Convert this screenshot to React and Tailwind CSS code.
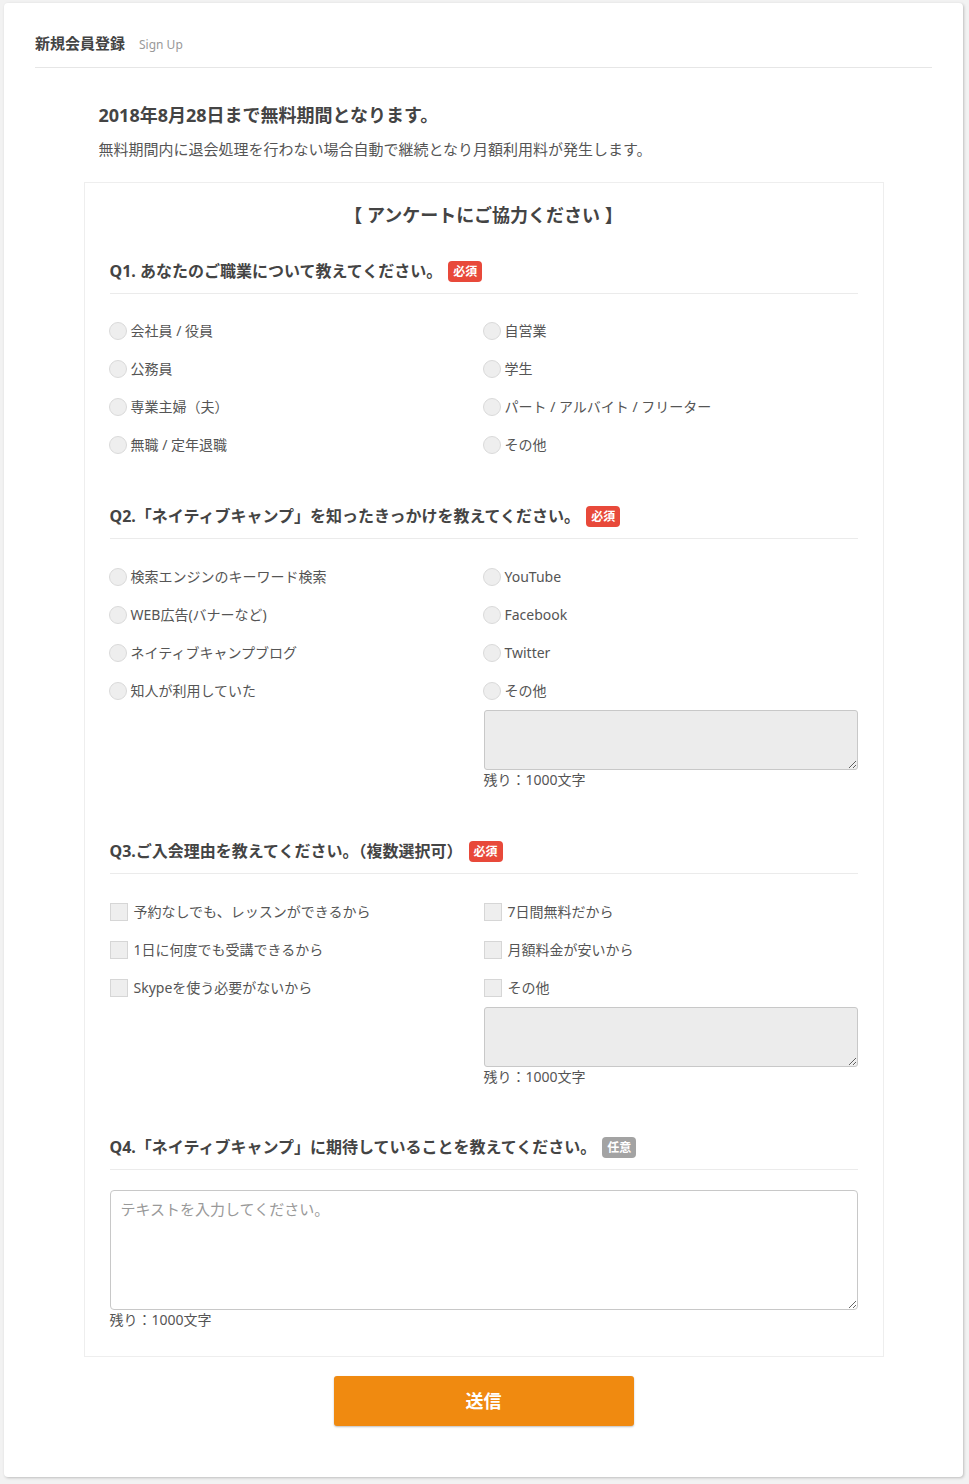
import React from "react";

const FONT = { fontFamily: '"Noto Sans", "Noto Sans CJK JP", sans-serif' };

function Radio({ label }) {
  return (
    <div className="flex h-[38px] items-center">
      <span className="ml-[-1px] inline-block h-[18px] w-[18px] rounded-full border border-[#dadada] bg-[#eeeeee]" />
      <span className="ml-[4px] text-[14px] leading-[20px] text-[#555]">{label}</span>
    </div>
  );
}

function Check({ label }) {
  return (
    <div className="flex h-[38px] items-center">
      <span className="inline-block h-[18px] w-[18px] border border-[#d6d6d6] bg-[#eeeeee]" />
      <span className="ml-[6px] text-[14px] leading-[20px] text-[#555]">{label}</span>
    </div>
  );
}

function Badge({ children, gray }) {
  return (
    <span
      className={
        "ml-[6px] inline-flex h-[21px] items-center rounded-[4px] px-[5px] text-[12px] font-bold leading-[21px] text-white " +
        (gray ? "bg-[#a3a3a3]" : "bg-[#e8493a]")
      }
    >
      {children}
    </span>
  );
}

function QHead({ children, badge, gray, className }) {
  return (
    <div className={"flex items-center border-b border-[#ebebeb] pb-[10px] " + (className || "")}>
      <span className="text-[16px] font-bold leading-[24px] text-[#444]">{children}</span>
      <Badge gray={gray}>{badge}</Badge>
    </div>
  );
}

function Remain() {
  return <div className="text-[14px] leading-[20px] text-[#555]">残り：1000文字</div>;
}

export default function App() {
  return (
    <div className="min-h-[1484px] bg-[#f2f2f2] pt-[3px]" style={FONT}>
      <div className="ml-[4px] w-[959px] rounded-[4px] bg-white pb-[51px] shadow-[1px_1px_3px_rgba(0,0,0,0.22)]">
        {/* header */}
        <div className="px-[31px] pt-[30px]">
          <div className="flex items-baseline border-b border-[#e6e6e6] pb-[12px]">
            <span className="text-[15px] font-bold leading-[20px] text-[#444]">新規会員登録</span>
            <span className="ml-[14px] text-[12px] leading-[20px] text-[#999]">Sign Up</span>
          </div>
        </div>

        <div className="mx-auto w-[800px]">
          <div className="pl-[15px] pt-[34px]">
            <div className="text-[18px] font-bold leading-[26px] text-[#444]">
              2018年8月28日まで無料期間となります。
            </div>
            <div className="mt-[10px] text-[15px] leading-[22px] text-[#555]">
              無料期間内に退会処理を行わない場合自動で継続となり月額利用料が発生します。
            </div>
          </div>

          {/* survey box */}
          <div className="mt-[22px] border border-[#eeeeee] px-[25px] pb-[26px] pt-[19px]">
            <div className="text-center text-[18px] font-bold leading-[26px] text-[#444]">
              【 アンケートにご協力ください 】
            </div>

            {/* Q1 */}
            <QHead className="mt-[31px]" badge="必須">
              Q1. あなたのご職業について教えてください。
            </QHead>
            <div className="mt-[18px] grid grid-cols-2">
              <div className="flex flex-col">
                <Radio label="会社員 / 役員" />
                <Radio label="公務員" />
                <Radio label="専業主婦（夫）" />
                <Radio label="無職 / 定年退職" />
              </div>
              <div className="flex flex-col">
                <Radio label="自営業" />
                <Radio label="学生" />
                <Radio label="パート / アルバイト / フリーター" />
                <Radio label="その他" />
              </div>
            </div>

            {/* Q2 */}
            <QHead className="mt-[40px]" badge="必須">
              Q2.「ネイティブキャンプ」を知ったきっかけを教えてください。
            </QHead>
            <div className="mt-[19px] grid grid-cols-2">
              <div className="flex flex-col">
                <Radio label="検索エンジンのキーワード検索" />
                <Radio label="WEB広告(バナーなど)" />
                <Radio label="ネイティブキャンプブログ" />
                <Radio label="知人が利用していた" />
              </div>
              <div className="flex flex-col">
                <Radio label="YouTube" />
                <Radio label="Facebook" />
                <Radio label="Twitter" />
                <Radio label="その他" />
                <textarea
                  className="block h-[60px] w-full rounded-[3px] border border-[#c8c8c8] bg-[#ececec] outline-none"
                  readOnly
                />
                <Remain />
              </div>
            </div>

            {/* Q3 */}
            <QHead className="mt-[49px]" badge="必須">
              Q3.ご入会理由を教えてください。（複数選択可）
            </QHead>
            <div className="mt-[19px] grid grid-cols-2">
              <div className="flex flex-col">
                <Check label="予約なしでも、レッスンができるから" />
                <Check label="1日に何度でも受講できるから" />
                <Check label="Skypeを使う必要がないから" />
              </div>
              <div className="flex flex-col">
                <Check label="7日間無料だから" />
                <Check label="月額料金が安いから" />
                <Check label="その他" />
                <textarea
                  className="block h-[60px] w-full rounded-[3px] border border-[#c8c8c8] bg-[#ececec] outline-none"
                  readOnly
                />
                <Remain />
              </div>
            </div>

            {/* Q4 */}
            <QHead className="mt-[48px]" badge="任意" gray>
              Q4.「ネイティブキャンプ」に期待していることを教えてください。
            </QHead>
            <textarea
              className="mt-[20px] block h-[120px] w-full rounded-[4px] border border-[#c8c8c8] bg-white px-[10px] py-[7px] text-[15px] leading-[22px] text-[#555] outline-none placeholder:text-[#999]"
              placeholder="テキストを入力してください。"
              style={FONT}
            />
            <Remain />
          </div>

          <div className="mt-[19px] flex justify-center">
            <button
              className="h-[50px] w-[300px] rounded-[3px] bg-[#f08a10] text-[18px] font-bold text-white shadow-[0_1px_2px_rgba(0,0,0,0.25)]"
              style={FONT}
            >
              送信
            </button>
          </div>
        </div>
      </div>
    </div>
  );
}
